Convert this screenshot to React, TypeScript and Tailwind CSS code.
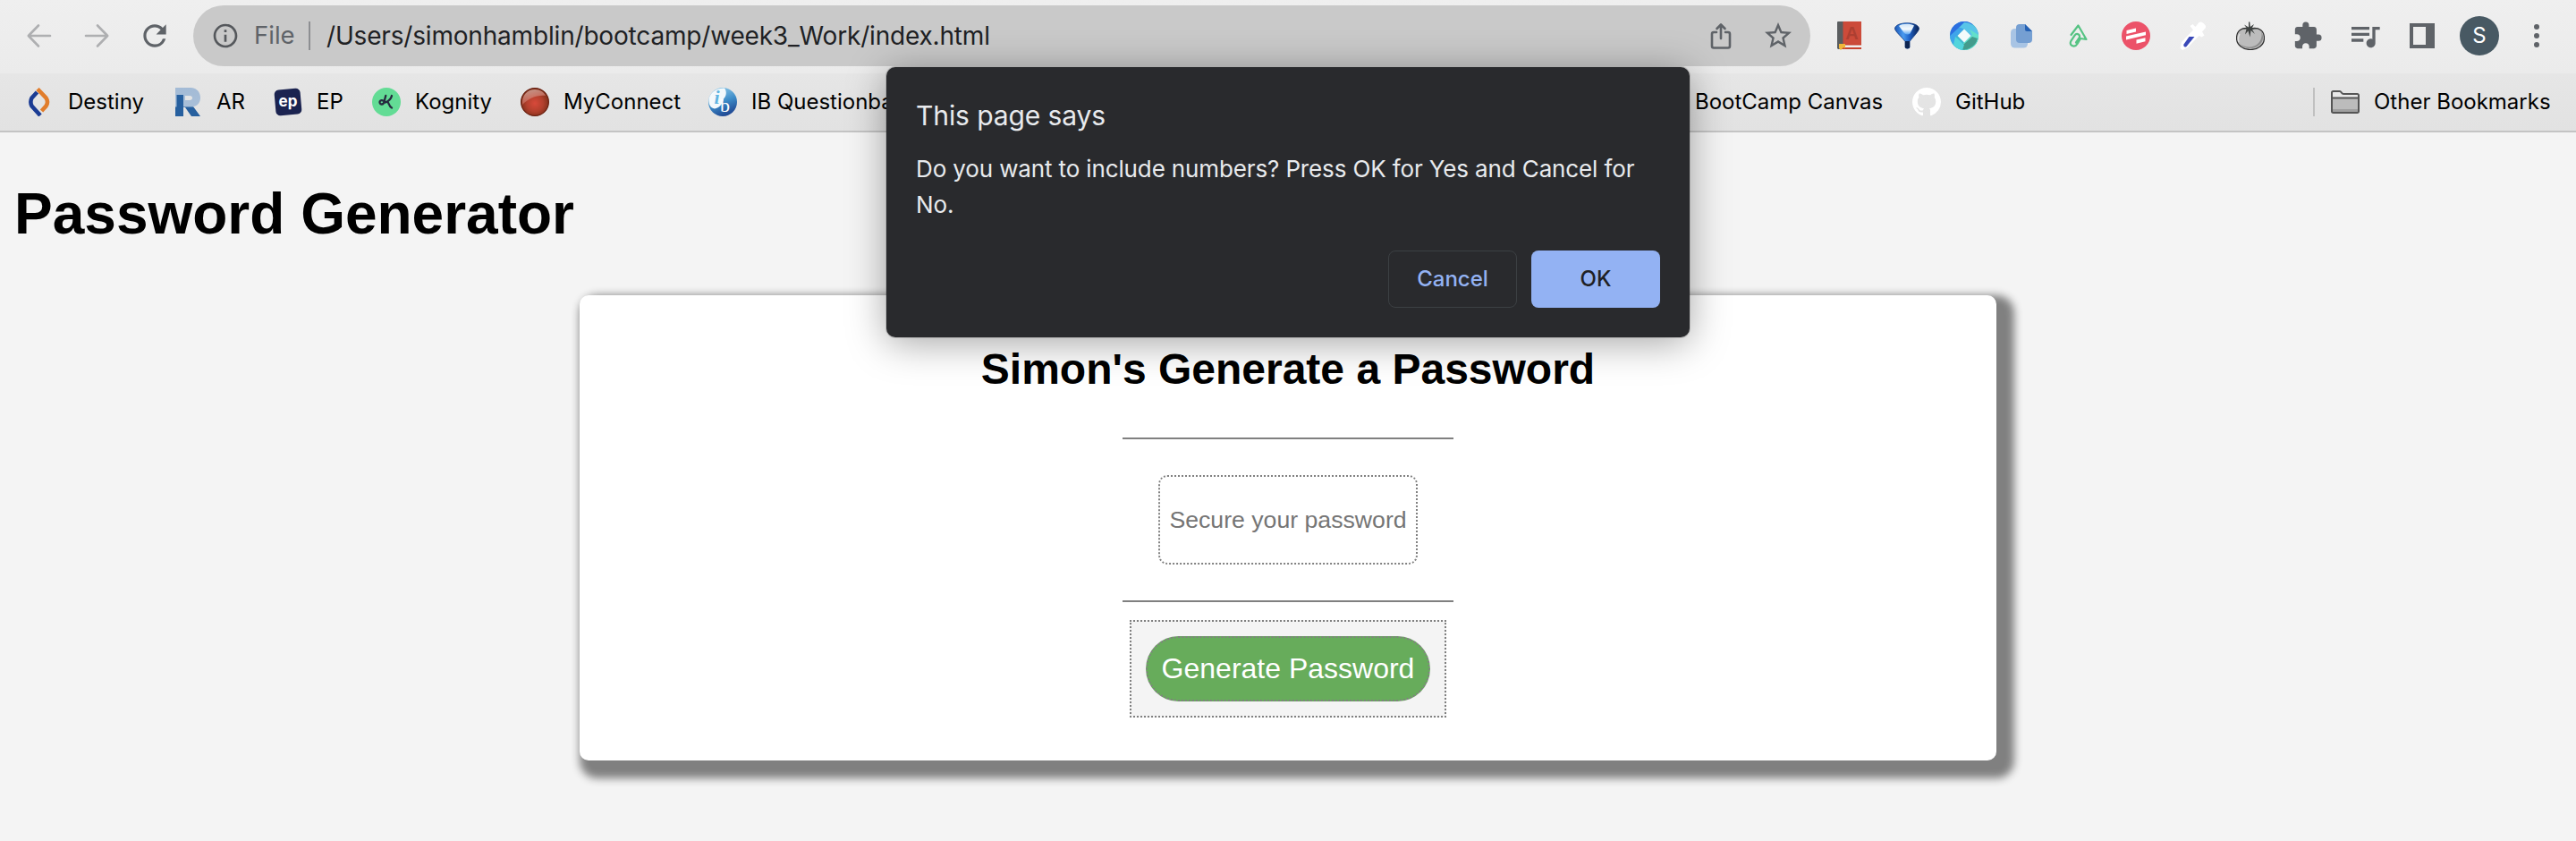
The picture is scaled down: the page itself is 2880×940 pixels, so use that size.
import type { ReactNode } from "react";
import { MdExtension, MdQueueMusic, MdOutlineInfo, MdStarBorder, MdRefresh } from "react-icons/md";

function Arrow({ flip = false }: { flip?: boolean }) {
  return (
    <svg viewBox="0 0 32 32" className={flip ? "size-8 rotate-180" : "size-8"} fill="none" stroke="#aeafb1" strokeWidth="2.6" strokeLinecap="round" strokeLinejoin="round">
      <path d="M28 16H4.500M15 4.500L3.800 16L15 27.500" />
    </svg>
  );
}

function ShareIcon() {
  return (
    <svg viewBox="0 0 32 32" className="size-8" fill="none" stroke="#5f6368" strokeWidth="2.600" strokeLinejoin="round" strokeLinecap="round">
      <path d="M11 12H8a2 2 0 0 0-2 2v13.500a2 2 0 0 0 2 2h16a2 2 0 0 0 2-2V14a2 2 0 0 0-2-2h-3M16 19V4M11.500 8L16 3.500L20.500 8" />
    </svg>
  );
}

function BookIcon() {
  return (
    <svg viewBox="0 0 32 32" className="size-8">
      <path d="M2 1a1 1 0 0 1 1-1h6v31H3l-1-1z" fill="#5a5d5f" />
      <path d="M8.500 0H29v25H8.500z" fill="#cc4b3a" />
      <path d="M6 25h23v5H6z" fill="#f1efee" />
      <path d="M6 25h23v1.500H6zM6 29h23v2H6z" fill="#c7432f" />
      <path d="M4 25h7v5l-2-1-3 3-2-2z" fill="#f0b63a" />
      <text x="18.500" y="20" textAnchor="middle" fontFamily="Liberation Sans" fontWeight="700" fontSize="20" fill="#ad3f31">A</text>
    </svg>
  );
}

function FunnelIcon() {
  return (
    <svg viewBox="0 0 32 32" className="size-8">
      <defs>
        <linearGradient id="funnel" x1="0" x2="1">
          <stop offset="0" stopColor="#1a55b4" />
          <stop offset=".35" stopColor="#4a9bf0" />
          <stop offset=".6" stopColor="#1f62c8" />
          <stop offset="1" stopColor="#0a1f4d" />
        </linearGradient>
        <linearGradient id="funnelTop" x2="0" y2="1">
          <stop offset="0" stopColor="#cfe4f8" />
          <stop offset=".5" stopColor="#f4f9fd" />
          <stop offset="1" stopColor="#5ba6f0" />
        </linearGradient>
      </defs>
      <path d="M2.500 8C2.500 4.500 8 1.800 16 1.800S29.500 4.500 29.500 8c0 3-7.500 10-10.500 14.500v6.500c0 1.500-5 1.500-5 0v-6.500C11 18 2.500 11 2.500 8z" fill="url(#funnel)" stroke="#123a80" strokeWidth=".8" />
      <path d="M7 5C10 2.500 20 2 24 4.500l-4.500 9c-2 1.500-5.500 1-6.500-.5z" fill="url(#funnelTop)" />
      <path d="M14 22h5v7c0 1.500-5 1.500-5 0z" fill="#0d2450" />
    </svg>
  );
}

function RingIcon() {
  return (
    <svg viewBox="0 0 32 32" className="size-8">
      <circle cx="16" cy="16" r="16" fill="#3fb8cf" />
      <path d="M0 16A16 16 0 0 1 26 3.500L16 5L5 16z" fill="#2c6fe0" />
      <path d="M0 16l10-9 6 1-9 9 2 12A16 16 0 0 1 0 16z" fill="#3fa5ea" />
      <path d="M16 1A16 16 0 0 1 32 16l-6 3L15 8l-5-1z" fill="#58c4e8" />
      <path d="M32 15A16 16 0 0 1 17 32l-2-8 10-9-3-6z" fill="#62e0ca" />
      <path d="M31 19A16 16 0 0 1 7 29l1-5 8 1 9-8z" fill="#439c8d" />
      <path d="M6 17l10 9-2 6A16 16 0 0 1 4 26z" fill="#52d5dc" />
      <path d="M16 8.500l7.500 7.500-7.500 7.500L8.500 16z" fill="#f2fbfb" />
    </svg>
  );
}

function PagesIcon() {
  return (
    <svg viewBox="0 0 32 32" className="size-8">
      <rect x="4" y="8" width="19" height="21.500" rx="4.500" fill="#a8c4e4" />
      <path d="M14 3h6l8 8v9a4 4 0 0 1-4 4H14a4 4 0 0 1-4-4V7a4 4 0 0 1 4-4z" fill="#759fd2" />
      <path d="M20 3l8 8h-6a2 2 0 0 1-2-2z" fill="#2461b4" />
    </svg>
  );
}

function ClipIcon() {
  return (
    <svg viewBox="0 0 32 32" className="size-8" fill="none" stroke="#55c383" strokeWidth="2.200" strokeLinecap="round" strokeLinejoin="round">
      <path d="M8.500 15.500L16.500 5L25.500 20.500L19 19.500L15.500 25.500c-1.500 2.500-4 3-6 2s-2.300-3.200-1-5.300l4-6c1.200-1.800 3-2 4.300-1.200s1.700 2.400.7 4l-3.500 5" transform="translate(-1 -.5)" />
    </svg>
  );
}

function StripesIcon() {
  return (
    <svg viewBox="0 0 32 32" className="size-8">
      <circle cx="16" cy="16" r="16" fill="#ec5269" />
      <path d="M5.500 10l10.500-2.500v4L5.500 14zM5 16.500l22-5v3.800L5 20.500zM16.500 20.500l10-2.300v4l-10 2.500z" fill="#fff" />
    </svg>
  );
}

function DropperIcon() {
  return (
    <svg viewBox="0 0 32 32" className="size-8">
      <path d="M12.500 5l3-2 3 3 4-5c2.500-1.500 4 0 5.500 1.500s3 3 1.500 5l-3.500 4 2.500 4-3 2-3-1.500L10 29l-6 3-2.500-2 1.500-7L16 9.500z" fill="#fff" />
      <path d="M11.500 17h6L8.500 28c-2 1.500-4-.5-3-2.500z" fill="#3a49b8" />
    </svg>
  );
}

function TomatoIcon() {
  return (
    <svg viewBox="0 0 32 32" className="size-8">
      <path d="M16 8C26 5.500 31.500 11 31.500 18.500S25 31.500 16 31.500.5 26 .5 18.500 6 5.500 16 8z" fill="#bcbcbc" stroke="#2d2d2d" strokeWidth="1.200" />
      <path d="M4 25c6 5 17 5 22-2 3-4 3-9 2-12 3 5 3 11-2 15-6 6-17 5-22-1z" fill="#8c8c8c" />
      <path d="M4 14c-2 3-2 6-1 9" stroke="#e0e0e0" strokeWidth="1.400" fill="none" />
      <path d="M6 8.500l6-1-3-4 5 3L14 .5h1.300l.5 5.500L20 3l-2 4 6 1-6 1 3 5-4.500-4-1 7.500-2-7-3.500 4 1.500-6z" fill="#3e4241" />
    </svg>
  );
}

function PanelIcon() {
  return (
    <svg viewBox="0 0 28 28" className="size-7">
      <path fillRule="evenodd" d="M0 0h28v28H0zM4 4v20h14V4z" fill="#5f6368" />
    </svg>
  );
}

function DotsIcon() {
  return (
    <svg viewBox="0 0 32 32" className="size-8" fill="#5f6368">
      <circle cx="16" cy="6" r="3" />
      <circle cx="16" cy="16" r="3" />
      <circle cx="16" cy="26" r="3" />
    </svg>
  );
}

function DestinyIcon() {
  return (
    <svg viewBox="0 0 32 32" className="size-8" fill="none" strokeWidth="4.600">
      <path d="M13.500 5L7.500 11.500c-1.500 3-1.500 6 0 9L17 31" stroke="#1b3c94" />
      <path d="M14 1.500L23.500 11.500c2 3 2 6 0 9L18.500 26" stroke="#e17d2c" />
    </svg>
  );
}

function ArIcon() {
  return (
    <svg viewBox="0 0 32 32" className="size-8">
      <defs>
        <linearGradient id="ar" x2="0" y2="1">
          <stop offset="0" stopColor="#a3bbd6" />
          <stop offset=".64" stopColor="#a9bfd8" />
          <stop offset=".7" stopColor="#27609f" />
        </linearGradient>
      </defs>
      <path fillRule="evenodd" d="M2 0h18c13 1 13 20 2 21l8 11H20l-7-10h-2v10H2zM13 9v5h5c4 0 4-5 0-5z" fill="url(#ar)" />
      <path d="M3.500 8H11v24H3.500z" fill="#27609f" />
    </svg>
  );
}

function EpIcon() {
  return (
    <svg viewBox="0 0 32 32" className="size-8">
      <rect x="1.500" y="1.500" width="29" height="29" rx="5" fill="#1b2350" transform="rotate(-5 16 16)" />
      <text x="16" y="20.500" textAnchor="middle" fontFamily="Inter" fontWeight="700" fontSize="17" fill="#fff">ep</text>
    </svg>
  );
}

function KognityIcon() {
  return (
    <svg viewBox="0 0 32 32" className="size-8" fill="none">
      <circle cx="16" cy="16" r="16" fill="#63dc95" />
      <path d="M15.300 8.800L13.700 15c-.4 2.300-1.500 3.600-3 3.500-1.800-.1-2.600-1.800-2-3.200.8-1.600 2.800-1.600 6.300.7M22 9c-.8 3.600-3.500 6-7 7.500M17 15.500c2 1 1.500 5.500 5 7" stroke="#262a3f" strokeWidth="2.300" strokeLinecap="round" />
    </svg>
  );
}

function BallIcon() {
  return (
    <svg viewBox="0 0 32 32" className="size-8">
      <defs>
        <radialGradient id="ball" cx=".5" cy=".55" r=".5">
          <stop offset="0" stopColor="#d8493a" />
          <stop offset=".6" stopColor="#b2402d" />
          <stop offset="1" stopColor="#85311c" />
        </radialGradient>
        <linearGradient id="gloss" x2=".4" y2="1">
          <stop offset="0" stopColor="#d9c0b6" />
          <stop offset="1" stopColor="#c95848" />
        </linearGradient>
      </defs>
      <circle cx="16" cy="16" r="15.400" fill="url(#ball)" stroke="#6a2212" strokeWidth="1.200" />
      <path d="M2 19C1 8 8 2 16 2c6 0 10 3 12 7C18 8 9 12 2 19z" fill="url(#gloss)" opacity=".75" />
    </svg>
  );
}

function IbIcon() {
  return (
    <svg viewBox="0 0 32 32" className="size-8">
      <defs>
        <linearGradient id="ib" x1=".3" x2=".7" y2="1">
          <stop offset="0" stopColor="#8fcaea" />
          <stop offset=".5" stopColor="#3d8cc8" />
          <stop offset="1" stopColor="#1b3f8c" />
        </linearGradient>
      </defs>
      <circle cx="16" cy="16" r="16" fill="url(#ib)" />
      <path d="M.5 12C3 4 10 .5 18 .5c3 4 2 9-1 12-1 6-5 10-10 11C2 23 0 18 .5 12z" fill="#f3f9fc" />
      <text x="9.500" y="18" fontFamily="Liberation Serif" fontStyle="italic" fontWeight="700" fontSize="22" fill="#5fb4e2" textAnchor="middle">i</text>
      <text x="18.500" y="27" fontFamily="Liberation Serif" fontSize="22" fill="#fff" textAnchor="middle">b</text>
    </svg>
  );
}

function GitHubIcon() {
  return (
    <svg viewBox="0 0 16 16" className="size-8" fill="#fff">
      <path d="M8 0C3.580 0 0 3.580 0 8c0 3.540 2.290 6.530 5.470 7.590.4.070.55-.17.55-.38 0-.19-.01-.82-.01-1.490-2.010.37-2.530-.49-2.690-.94-.09-.23-.48-.94-.82-1.130-.28-.15-.68-.52-.01-.53.63-.01 1.080.58 1.230.82.72 1.210 1.870.87 2.330.66.07-.52.28-.87.51-1.070-1.780-.2-3.640-.89-3.640-3.950 0-.87.31-1.590.82-2.150-.08-.2-.36-1.020.08-2.120 0 0 .67-.21 2.200.82.64-.18 1.320-.27 2-.27s1.360.09 2 .27c1.530-1.040 2.200-.82 2.200-.82.44 1.100.16 1.920.08 2.120.51.56.82 1.270.82 2.150 0 3.070-1.870 3.750-3.650 3.950.29.25.54.73.54 1.480 0 1.070-.01 1.930-.01 2.200 0 .21.15.46.55.38A8.010 8.010 0 0 0 16 8c0-4.420-3.580-8-8-8" />
    </svg>
  );
}

function FolderIcon() {
  return (
    <svg viewBox="0 0 32 32" className="size-8">
      <path d="M1 27V5.500a1.500 1.500 0 0 1 1.500-1.500h8l3 3H29.500A1.500 1.500 0 0 1 31 8.500V27z" fill="#e8e8e8" />
      <path d="M1 11.500h30V27H1z" fill="#bcbcbc" />
      <path d="M1 24h30v3H1z" fill="#9f9f9f" />
      <path d="M1 11.500h30M1 26.500V5.500a1.500 1.500 0 0 1 1.500-1.500h7.500c1.500 0 2 3 4 3H29.500A1.500 1.500 0 0 1 31 8.500V26.500a1.500 1.500 0 0 1-1.500 1.500h-27a1.500 1.500 0 0 1-1.500-1.500z" fill="none" stroke="#555" strokeWidth="2" />
    </svg>
  );
}

function Bookmark({ icon, label, width }: { icon: ReactNode; label: string; width: string }) {
  return (
    <div className={`flex shrink-0 items-center gap-4 whitespace-nowrap ${width}`}>
      {icon}
      <span>{label}</span>
    </div>
  );
}

const extensions: ReactNode[] = [
  <BookIcon />,
  <FunnelIcon />,
  <RingIcon />,
  <PagesIcon />,
  <ClipIcon />,
  <StripesIcon />,
  <DropperIcon />,
  <TomatoIcon />,
  <MdExtension className="size-[34px] text-[#5f6368]" />,
  <MdQueueMusic className="size-10 text-[#5f6368]" />,
  <PanelIcon />,
  <div className="flex size-11 items-center justify-center rounded-full bg-[#485963] text-[24px] text-white">S</div>,
  <DotsIcon />,
];

function Toolbar() {
  return (
    <div className="flex h-[82px] items-start bg-linear-to-b from-[#efefef] to-[#ebebeb]">
      <div className="flex h-20 w-[216px] shrink-0 items-center gap-8 pl-7">
        <Arrow />
        <Arrow flip />
        <MdRefresh className="-ml-0.5 size-[38px] text-[#5f6368]" />
      </div>
      <div className="mt-1.5 flex h-[68px] w-[1808px] shrink-0 items-center rounded-full bg-[#c9c9c9] pl-5">
        <MdOutlineInfo className="size-8 text-[#55585c]" />
        <span className="ml-4 w-[61px] text-[27.500px] text-[#5f6368]">File</span>
        <span className="h-8 w-0.5 bg-[#8d8f92]" />
        <span className="ml-[18px] flex-1 text-[28px] tracking-[-0.180px] text-[#202124]">/Users/simonhamblin/bootcamp/week3_Work/index.html</span>
        <div className="flex items-center gap-[30px] pr-[18px]">
          <ShareIcon />
          <MdStarBorder className="size-9 text-[#5f6368]" />
        </div>
      </div>
      <div className="ml-3 flex h-20">
        {extensions.map((icon, i) => (
          <div key={i} className="flex w-16 items-center justify-center">
            {icon}
          </div>
        ))}
      </div>
    </div>
  );
}

function BookmarksBar() {
  return (
    <div className="flex h-[66px] items-center border-b-2 border-[#c4c4c4] bg-linear-to-b from-[#e6e6e6] to-[#e2e2e2] pl-7 text-[24px] text-black">
      <Bookmark icon={<DestinyIcon />} label="Destiny" width="w-[166px]" />
      <Bookmark icon={<ArIcon />} label="AR" width="w-[112px]" />
      <Bookmark icon={<EpIcon />} label="EP" width="w-[110px]" />
      <Bookmark icon={<KognityIcon />} label="Kognity" width="w-[166px]" />
      <Bookmark icon={<BallIcon />} label="MyConnect" width="w-[210px]" />
      <Bookmark icon={<IbIcon />} label="IB Questionbank" width="w-[1055px]" />
      <Bookmark icon={<span className="size-8" />} label="BootCamp Canvas" width="w-[291px]" />
      <Bookmark icon={<GitHubIcon />} label="GitHub" width="w-[448px]" />
      <span className="mr-[18px] h-8 w-0.5 bg-[#c0c0c0]" />
      <Bookmark icon={<FolderIcon />} label="Other Bookmarks" width="w-[250px]" />
    </div>
  );
}

function ConfirmDialog() {
  return (
    <div className="absolute top-[75px] left-[991px] flex h-[302px] w-[898px] flex-col rounded-[10px] bg-[#292a2d] px-[33px] text-[#e8eaed] shadow-[0_6px_44px_rgba(0,0,0,0.36),0_0_0_1px_rgba(0,0,0,0.15)]">
      <h3 className="mt-[34px] text-[30px] leading-10 tracking-[-0.100px]">This page says</h3>
      <p className="mt-5 text-[26px] leading-10 tracking-[-0.130px]">
        Do you want to include numbers? Press OK for Yes and Cancel for
        <br />
        No.
      </p>
      <div className="mt-[31px] flex justify-end gap-4 text-[24px] font-medium">
        <button className="h-16 w-36 rounded-lg border border-[#3c4043] text-[#93b2f3]">Cancel</button>
        <button className="h-16 w-36 rounded-lg bg-[#93b2f3] text-[#202124]">OK</button>
      </div>
    </div>
  );
}

export default function App() {
  return (
    <div className="relative h-[940px] w-[2880px] overflow-hidden bg-[#f4f4f4] font-['Inter',sans-serif]">
      <Toolbar />
      <BookmarksBar />
      <main className="flex flex-col font-['Liberation_Sans',Arial,sans-serif] text-black">
        <h1 className="mt-[54px] ml-4 text-[64px] leading-[74px] font-bold">Password Generator</h1>
        <section className="mx-auto mt-[54px] flex h-[520px] w-[1584px] flex-col items-center rounded-[10px] bg-white shadow-[10px_10px_10px_10px_#808080]">
          <h2 className="mt-[55px] text-[48px] leading-[55px] font-bold">Simon's Generate a Password</h2>
          <div className="mt-[49px] h-0.5 w-[370px] bg-[#808080]" />
          <div className="mt-10 flex h-[100px] w-[290px] items-center justify-center rounded-[10px] border-2 border-dotted border-[#808080] pt-0.5 text-[26.660px] text-[#757575]">
            Secure your password
          </div>
          <div className="mt-10 h-0.5 w-[370px] bg-[#808080]" />
          <div className="mt-5 flex h-[109px] w-[354px] items-center justify-center border-2 border-dotted border-[#808080] bg-[#f4f4f4]">
            <button className="h-[73px] w-[318px] rounded-[40px] border-2 border-dotted border-[#808080] bg-[#67ac5b] pb-0.5 text-[32px] text-white">
              Generate Password
            </button>
          </div>
        </section>
      </main>
      <ConfirmDialog />
    </div>
  );
}
